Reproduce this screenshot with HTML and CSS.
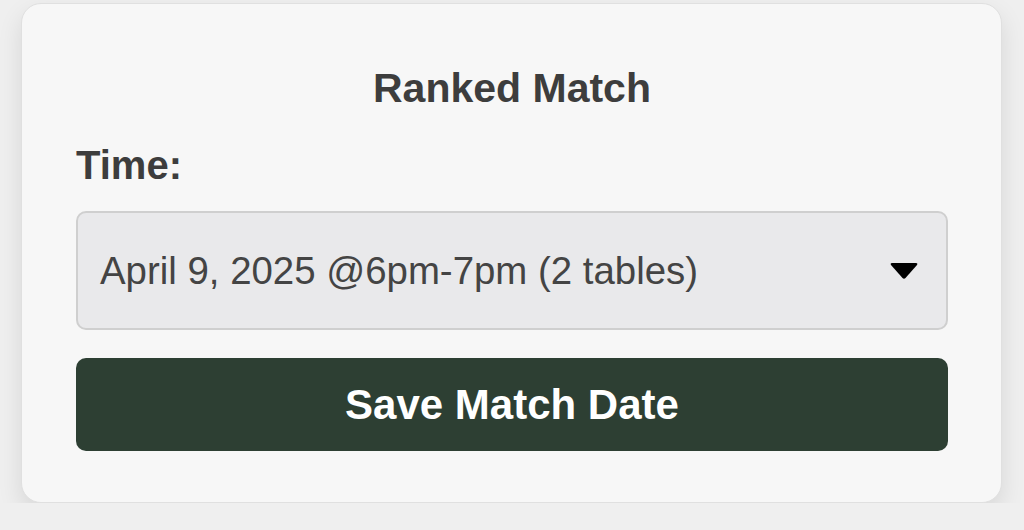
FILE: index.html
```html
<!DOCTYPE html>
<html>
<head>
<title>Ranked Match</title>
<link rel="stylesheet" href="styles.css">
</head>
<body>
<div class="card">
  <h2 class="title">Ranked Match</h2>
  <label class="label" for="time">Time:</label>
  <div class="select" id="time">
    <span class="select-text">April 9, 2025 @6pm-7pm (2 tables)</span>
    <svg class="arrow" width="28" height="18" viewBox="0 0 28 18">
      <path d="M2 1 L26 1 Q28 1 27 3 L15.5 16 Q14 17.5 12.5 16 L1 3 Q0 1 2 1 Z" fill="#000"/>
    </svg>
  </div>
  <button class="save">Save Match Date</button>
</div>
</body>
</html>
```

FILE: styles.css
```css
body {
  margin: 0;
  background: #efefef;
  font-family: "Liberation Sans", Arial, sans-serif;
}
.card {
  margin: 3px 0 0 21px;
  width: 981px;
  height: 500px;
  box-sizing: border-box;
  padding: 60px 53px 0 54px;
  background: #f7f7f7;
  border: 1px solid #e0e0e0;
  border-radius: 20px;
  box-shadow: 0 10px 24px rgba(0, 0, 0, 0.1);
}
.title {
  margin: 0;
  font-size: 41px;
  line-height: 48px;
  font-weight: bold;
  color: #3d3d3d;
  text-align: center;
}
.label {
  display: block;
  margin-top: 29px;
  font-size: 40px;
  line-height: 48px;
  font-weight: bold;
  color: #3d3d3d;
}
.select {
  margin-top: 22px;
  height: 119px;
  box-sizing: border-box;
  display: flex;
  align-items: center;
  justify-content: space-between;
  padding: 0 28px 0 22px;
  background: #e9e9eb;
  border: 2px solid #cfcfcf;
  border-radius: 10px;
}
.select-text {
  font-size: 38.4px;
  color: #444;
}
.arrow {
  display: block;
}
.save {
  display: block;
  width: 100%;
  height: 93px;
  margin-top: 28px;
  border: none;
  border-radius: 10px;
  background: #2d3f33;
  color: #fff;
  font-family: "Liberation Sans", Arial, sans-serif;
  font-size: 42px;
  font-weight: bold;
}
```
